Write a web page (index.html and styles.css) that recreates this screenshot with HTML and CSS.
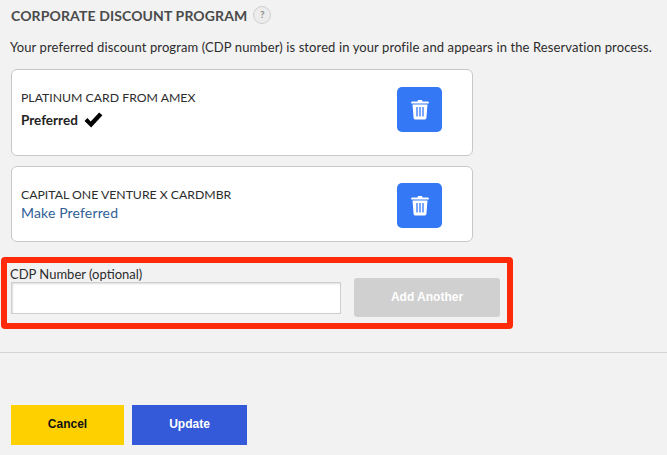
FILE: index.html
```html
<!DOCTYPE html>
<html lang="en">
  <head>
    <meta charset="UTF-8" />
    <meta name="viewport" content="width=device-width, initial-scale=1.0" />
    <title>Corporate Discount Program</title>
    <link rel="stylesheet" href="styles.css">
  </head>
  <body>
    <main>
      <div class="heading">
        <h2>CORPORATE DISCOUNT PROGRAM</h2>
        <span class="help">?</span>
      </div>
      <p class="intro">Your preferred discount program (CDP number) is stored in your profile and appears in the Reservation process.</p>

      <div class="card card-first">
        <div class="card-text">
          <div class="card-name">PLATINUM CARD FROM AMEX</div>
          <div class="preferred">
            Preferred
            <svg class="check" viewBox="0 0 20 17" width="19" height="16">
              <path d="M0.5 9.5 L3.5 6.5 L7 10 L16 0.5 L19.5 3.5 L7.5 16.5 Z" fill="#000" />
            </svg>
          </div>
        </div>
        <button type="button" class="delete" aria-label="Delete">
          <svg viewBox="0 0 18 20" width="18" height="21">
            <path d="M6.5 2 L7 0.6 H11 L11.5 2 H17 a0.8 0.8 0 0 1 0.8 0.8 V4 H0.2 V2.8 A0.8 0.8 0 0 1 1 2 Z" fill="#fff" />
            <path d="M1.5 5 H16.5 L15.4 18.6 A1.5 1.5 0 0 1 14 20 H4 A1.5 1.5 0 0 1 2.6 18.6 Z" fill="#fff" />
            <path d="M6 7.5 V17 M9 7.5 V17 M12 7.5 V17" stroke="#3478f6" stroke-width="1.3" />
          </svg>
        </button>
      </div>

      <div class="card card-second">
        <div class="card-text">
          <div class="card-name">CAPITAL ONE VENTURE X CARDMBR</div>
          <a class="make-preferred" href="#">Make Preferred</a>
        </div>
        <button type="button" class="delete" aria-label="Delete">
          <svg viewBox="0 0 18 20" width="18" height="21">
            <path d="M6.5 2 L7 0.6 H11 L11.5 2 H17 a0.8 0.8 0 0 1 0.8 0.8 V4 H0.2 V2.8 A0.8 0.8 0 0 1 1 2 Z" fill="#fff" />
            <path d="M1.5 5 H16.5 L15.4 18.6 A1.5 1.5 0 0 1 14 20 H4 A1.5 1.5 0 0 1 2.6 18.6 Z" fill="#fff" />
            <path d="M6 7.5 V17 M9 7.5 V17 M12 7.5 V17" stroke="#3478f6" stroke-width="1.3" />
          </svg>
        </button>
      </div>

      <div class="cdp-box">
        <div class="cdp-field">
          <label for="cdp">CDP Number (optional)</label>
          <input type="text" id="cdp" />
        </div>
        <button type="button" class="add-another">Add Another</button>
      </div>
    </main>

    <hr />

    <div class="actions">
      <button type="button" class="cancel">Cancel</button>
      <button type="button" class="update">Update</button>
    </div>
  </body>
</html>
```

FILE: styles.css
```css
* {
  box-sizing: border-box;
}

body {
  margin: 0;
  height: 455px;
  overflow: hidden;
  background-color: #f2f2f2;
  color: #2c2c2c;
  font-family: "Lato", "Noto Sans", sans-serif;
}

main {
  padding-top: 5px;
}

.heading {
  display: flex;
  align-items: center;
  gap: 6px;
  height: 20px;
  margin-left: 11px;
}

h2 {
  margin: 0;
  font-size: 14px;
  font-weight: 700;
  letter-spacing: 0.12px;
  color: #4a4a4a;
}

.help {
  width: 18px;
  height: 18px;
  border: 1.5px solid #cfcfcf;
  border-radius: 50%;
  background-color: #ececec;
  color: #8a8a8a;
  font-size: 10px;
  font-weight: 700;
  line-height: 15px;
  text-align: center;
}

.intro {
  margin: 13px 0 13px 10px;
  font-size: 13px;
  line-height: 18px;
  letter-spacing: 0.105px;
  white-space: nowrap;
}

.card {
  display: flex;
  align-items: center;
  justify-content: space-between;
  width: 462px;
  margin-left: 11px;
  padding: 0 30px 0 9px;
  border: 1px solid #c8c8c8;
  border-radius: 6px;
  background-color: #fff;
}

.card-first {
  height: 87px;
  margin-bottom: 10px;
  padding-bottom: 7px;
}

.card-second {
  height: 76px;
  padding-top: 3px;
}

.card-second .card-text {
  margin-bottom: 5px;
}

.card-name {
  font-size: 12.25px;
  line-height: 18px;
}

.preferred {
  display: flex;
  align-items: center;
  gap: 6px;
  margin-top: 4px;
  font-size: 13.5px;
  font-weight: 700;
  line-height: 18px;
  color: #222;
}

.make-preferred {
  display: block;
  font-size: 14px;
  line-height: 17px;
  letter-spacing: 0.15px;
  color: #2f5f96;
  text-decoration: none;
}

.delete {
  display: flex;
  align-items: center;
  justify-content: center;
  width: 45px;
  height: 45px;
  padding: 0;
  border: none;
  border-radius: 5px;
  background-color: #3478f6;
}

.cdp-box {
  display: flex;
  align-items: flex-end;
  gap: 13px;
  width: 512px;
  height: 72px;
  margin: 15px 0 0 1px;
  padding: 0 7px 6px 4px;
  border: 6px solid #ff2a0a;
  border-radius: 4px;
}

.cdp-field {
  display: flex;
  flex-direction: column;
  margin-bottom: 3px;
}

label {
  margin-left: -1px;
  padding-bottom: 1px;
  font-size: 13px;
  line-height: 14px;
}

input {
  width: 330px;
  height: 32px;
  border: 1px solid #cfcfcf;
  box-shadow: inset 1px 1px 2px #dcdcdc;
  background-color: #fff;
}

.add-another {
  width: 146px;
  height: 39px;
  padding-bottom: 3px;
  border: none;
  border-radius: 3px;
  background-color: #d0d0d0;
  color: #fff;
  font-family: "Liberation Sans", Arial, sans-serif;
  font-size: 12px;
  font-weight: 700;
}

hr {
  height: 1px;
  margin: 23px 0 0;
  border: none;
  background-color: #d4d4d4;
}

.actions {
  display: flex;
  gap: 8px;
  margin: 52px 0 0 11px;
}

.actions button {
  height: 40px;
  padding-bottom: 3px;
  border: none;
  font-family: "Liberation Sans", Arial, sans-serif;
  font-size: 12px;
  font-weight: 700;
}

.cancel {
  width: 113px;
  background-color: #ffd000;
  color: #111;
}

.update {
  width: 115px;
  background-color: #3459d9;
  color: #fff;
}
```
